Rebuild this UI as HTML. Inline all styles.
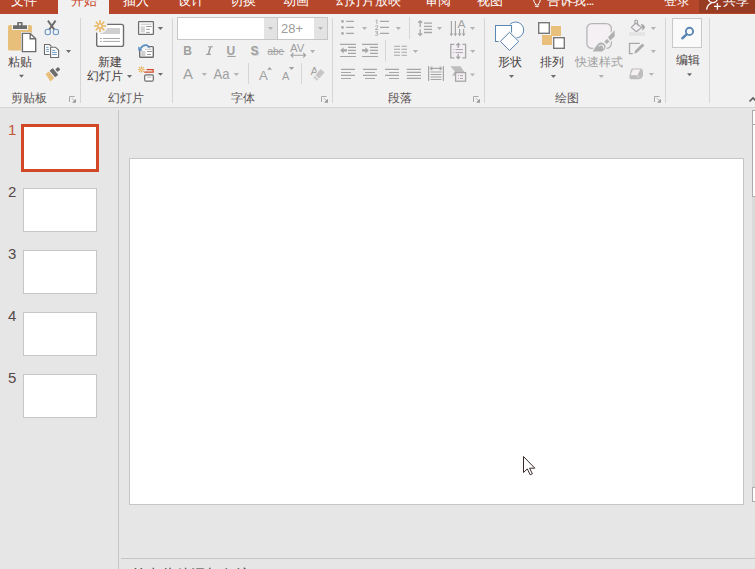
<!DOCTYPE html>
<html><head><meta charset="utf-8">
<style>
*{margin:0;padding:0;box-sizing:border-box}
html,body{width:755px;height:569px;overflow:hidden;background:#e6e6e6;font-family:"Liberation Sans",sans-serif;position:relative}
.a{position:absolute}
#top{left:0;top:0;width:755px;height:14px;background:#b7472a;overflow:hidden}
.tab{position:absolute;top:-6px;font-size:13px;line-height:14px;color:#fff;white-space:nowrap}
#rib{left:0;top:14px;width:755px;height:93px;background:#f1f1f1}
#ribb{left:0;top:107px;width:755px;height:1px;background:#d4d4d4}
.sep{position:absolute;width:1px;background:#d6d6d6}
.lbl{position:absolute;font-size:12px;line-height:14px;color:#5e5656;white-space:nowrap;margin-top:1px}
.big{position:absolute;font-size:12px;line-height:14px;color:#4a4242;white-space:nowrap;margin-top:1px}
.arr{position:absolute;width:0;height:0;border-left:2.5px solid transparent;border-right:2.5px solid transparent;border-top:3px solid #6d6d6d}
.arrg{border-top-color:#b0b0b0}
.launch{position:absolute;width:7px;height:7px}
.thumb{position:absolute;left:23px;width:74px;height:44px;background:#fff;border:1px solid #c6c6c6}
.num{position:absolute;left:8px;font-size:15px;line-height:16px;color:#564a48}
</style></head><body>
<div id="top" class="a">
  <div class="a" style="left:58px;top:0;width:51px;height:14px;background:#f1f1f1"></div>
  <div class="a" style="left:699px;top:0;width:56px;height:13px;background:#973b22"></div>
  <div class="tab" style="left:11px">文件</div>
  <div class="tab" style="left:71px;color:#c8431f">开始</div>
  <div class="tab" style="left:123px">插入</div>
  <div class="tab" style="left:178px">设计</div>
  <div class="tab" style="left:230px">切换</div>
  <div class="tab" style="left:283px">动画</div>
  <div class="tab" style="left:336px">幻灯片放映</div>
  <div class="tab" style="left:425px">审阅</div>
  <div class="tab" style="left:477px">视图</div>
  <div class="tab" style="left:547px">告诉我<span style="letter-spacing:-1.2px">...</span></div>
  <div class="tab" style="left:664px">登录</div>
  <div class="tab" style="left:723px">共享</div>
  <svg class="a" style="left:0;top:0" width="755" height="14" viewBox="0 0 755 14">
   <path d="M533.6 -1Q533.6 2.2 535.4 3.8V5H538.6V3.8Q540.4 2.2 540.4 -1" fill="none" stroke="#fff" stroke-width="1"/>
   <path d="M535.3 6.6H538.7" stroke="#fff" stroke-width="1"/>
   <circle cx="712.8" cy="-2" r="4.6" fill="none" stroke="#fff" stroke-width="1.3"/>
   <path d="M706.6 9.6Q707.4 4.6 711.5 3.2" fill="none" stroke="#fff" stroke-width="1.3"/>
   <path d="M717.4 3V9.8M714 6.4H720.8" stroke="#fff" stroke-width="1.3"/>
  </svg>
</div>
<div id="rib" class="a"></div>
<div id="ribb" class="a"></div>


<!-- RIBBON CONTENT -->
<div class="sep" style="left:80px;top:18px;height:85px"></div>
<div class="sep" style="left:172px;top:18px;height:85px"></div>
<div class="sep" style="left:332px;top:18px;height:85px"></div>
<div class="sep" style="left:484px;top:18px;height:85px"></div>
<div class="sep" style="left:665px;top:18px;height:85px"></div>
<div class="sep" style="left:709px;top:18px;height:85px"></div>

<div class="lbl" style="left:11px;top:90px">剪贴板</div>
<div class="lbl" style="left:108px;top:90px">幻灯片</div>
<div class="lbl" style="left:231px;top:90px">字体</div>
<div class="lbl" style="left:388px;top:90px">段落</div>
<div class="lbl" style="left:555px;top:90px">绘图</div>

<div class="big" style="left:8px;top:54px">粘贴</div>
<div class="big" style="left:98px;top:54px">新建</div>
<div class="big" style="left:87px;top:68px">幻灯片</div>

<svg class="a" style="left:0;top:0" width="755" height="107" viewBox="0 0 755 107">
 <g id="launchers"><path d="M69.5 102V96.5H74.5" fill="none" stroke="#a8a8a8" stroke-width="1"/><path d="M72 98.3L75.2 101.5" stroke="#a8a8a8" stroke-width="0.9"/><path d="M76 98.8V102.8H72Z" fill="#9a9a9a"/><path d="M321.5 102V96.5H326.5" fill="none" stroke="#a8a8a8" stroke-width="1"/><path d="M324 98.3L327.2 101.5" stroke="#a8a8a8" stroke-width="0.9"/><path d="M328 98.8V102.8H324Z" fill="#9a9a9a"/><path d="M473.5 102V96.5H478.5" fill="none" stroke="#a8a8a8" stroke-width="1"/><path d="M476 98.3L479.2 101.5" stroke="#a8a8a8" stroke-width="0.9"/><path d="M480 98.8V102.8H476Z" fill="#9a9a9a"/><path d="M654.5 102V96.5H659.5" fill="none" stroke="#a8a8a8" stroke-width="1"/><path d="M657 98.3L660.2 101.5" stroke="#a8a8a8" stroke-width="0.9"/><path d="M661 98.8V102.8H657Z" fill="#9a9a9a"/></g>
 <!-- paste -->
 <rect x="8" y="25" width="24" height="25.5" rx="1.5" fill="#e8bf7a"/>
 <rect x="12" y="24.5" width="16" height="5.5" fill="#f1f1f1"/>
 <path d="M13 25.3H17.2V22.3Q17.2 22 17.6 22H22.2Q22.6 22 22.6 22.3V25.3H27V29H13Z" fill="#6d6d6d"/>
 <circle cx="19.9" cy="24.3" r="1.1" fill="#f1f1f1"/>
 <path d="M21 32H30.6L37 38.3V53H21Z" fill="#f1f1f1"/>
 <path d="M22.4 33.4H30.2L35.7 38.8V51.6H22.4Z" fill="#fff" stroke="#6d6d6d" stroke-width="1.4"/>
 <path d="M30.2 33.4V38.8H35.7" fill="none" stroke="#6d6d6d" stroke-width="1.4"/>
 <path d="M19 74.8H24L21.5 77.8Z" fill="#6d6d6d"/>
 <!-- scissors -->
 <path d="M47.9 20.6L54.3 29.6M55.6 20.6L49.2 29.6" stroke="#6d6d6d" stroke-width="1.9" fill="none"/>
 <circle cx="47.8" cy="32" r="2.7" fill="none" stroke="#6a97c4" stroke-width="1.05"/>
 <circle cx="55.9" cy="32" r="2.7" fill="none" stroke="#6a97c4" stroke-width="1.05"/>
 <!-- copy -->
 <path d="M44.5 44.5H49.5L51.8 46.8V54.5H44.5Z" fill="#fff" stroke="#6d6d6d" stroke-width="1.1"/>
 <path d="M46.2 47.3H48.6M46.2 49.4H49M46.2 51.4H49" stroke="#5b8dc0" stroke-width="0.9"/>
 <path d="M49.7 46.4H55.8L59.4 50V58.2H49.7Z" fill="#f1f1f1"/>
 <path d="M50.6 47.2H55.5L58.6 50.3V57.5H50.6Z" fill="#fff" stroke="#6d6d6d" stroke-width="1.1"/>
 <path d="M52.2 50.4H55.2M52.2 52.4H56.8M52.2 54.4H56.8" stroke="#5b8dc0" stroke-width="0.9"/>
 <path d="M66 50H71L68.5 53Z" fill="#6d6d6d"/>
 <!-- format painter -->
 <g transform="translate(53.6 73) rotate(-40)">
  <rect x="3.6" y="-1.7" width="3.8" height="3.4" rx="0.6" fill="#6d6d6d"/>
  <rect x="-1.6" y="-4.3" width="4" height="8.6" rx="0.6" fill="#6d6d6d"/>
  <path d="M-2.6 -4.2V4.2L-7.8 4.4L-6.8 -4.4Z" fill="#e8bf7a"/>
 </g>
 <!-- new slide -->
 <rect x="96.7" y="24.4" width="26.8" height="22" rx="2" fill="#fff" stroke="#6d6d6d" stroke-width="1.4"/>
 <rect x="100" y="28" width="20" height="6" fill="#d0d0d0"/>
 <path d="M100 38.5H102M103 38.5H120M100 41.4H102M103 41.4H120" stroke="#a8a8a8" stroke-width="1"/>
 <circle cx="100" cy="26" r="7.5" fill="#f1f1f1"/>
 <g stroke="#e9b865" stroke-width="1.6">
  <path d="M100 20V24M100 28V32M94 26H98M102 26H106M95.8 21.8L98.6 24.6M101.4 27.4L104.2 30.2M104.2 21.8L101.4 24.6M98.6 27.4L95.8 30.2"/>
 </g>
 <circle cx="100" cy="26" r="2" fill="none" stroke="#e9b865" stroke-width="1.2"/>
 <path d="M127 75H132L129.5 78Z" fill="#6d6d6d"/>
 <!-- layout -->
 <rect x="138.6" y="21.6" width="14.8" height="12.8" rx="0.6" fill="#fff" stroke="#6d6d6d" stroke-width="1.25"/>
 <rect x="140.8" y="23.6" width="10.6" height="1.5" fill="#d4d4d4"/>
 <rect x="140.6" y="26.3" width="4.3" height="6.2" fill="#d4d4d4"/>
 <path d="M146.2 26.5H151.8M146.2 29.4H149.8M146.2 32.4H149.8" stroke="#8f8f8f" stroke-width="0.9"/>
 <path d="M157.7 27H163.1L160.4 30Z" fill="#6d6d6d"/>
 <!-- reset -->
 <rect x="139.7" y="46.6" width="13.6" height="10.6" rx="0.8" fill="#fff" stroke="#6d6d6d" stroke-width="1.4"/>
 <rect x="145" y="48.4" width="6.5" height="1.6" fill="#d0d0d0"/>
 <rect x="141.2" y="51" width="4.3" height="5" fill="#d0d0d0"/>
 <path d="M147 51.5H152M147 54.5H151" stroke="#8f8f8f" stroke-width="0.9"/>
 <path d="M138 44H149V49H138Z" fill="#f1f1f1"/>
 <path d="M140.5 48.5Q143 44.5 146.5 45.2Q148.5 45.8 149 47.8" fill="none" stroke="#5b8dc0" stroke-width="1.8"/>
 <path d="M138.2 46.2L138.4 50.8L142.8 50.4Z" fill="#5b8dc0"/>
 <!-- section -->
 <g stroke="#e9b865" stroke-width="1.1">
  <path d="M141.4 66.2V68.4M141.4 70.6V72.8M138 69.5H140.2M142.6 69.5H144.8M139 67.1L140.4 68.5M142.4 70.5L143.8 71.9M143.8 67.1L142.4 68.5M140.4 70.5L139 71.9"/>
 </g>
 <circle cx="141.4" cy="69.5" r="1" fill="none" stroke="#e9b865" stroke-width="0.9"/>
 <path d="M146.6 69.55H153.2V72.15H144.2" fill="none" stroke="#d24726" stroke-width="1.15"/>
 <rect x="144.7" y="74.8" width="8.6" height="6.4" rx="1.2" fill="#fff" stroke="#6d6d6d" stroke-width="1.2"/>
 <rect x="146.6" y="76.5" width="4.8" height="1.3" fill="#c8c8c8"/>
 <path d="M157.9 73H163L160.45 75.8Z" fill="#6d6d6d"/>
</svg>


<!-- FONT GROUP -->
<div class="a" style="left:177px;top:17px;width:101px;height:23px;border:1px solid #c6c6c6;background:#fff"></div>
<div class="a" style="left:264px;top:18px;width:13px;height:21px;background:#e3e3e3"></div>
<div class="a" style="left:277px;top:17px;width:51px;height:23px;border:1px solid #c6c6c6;background:#fff"></div>
<div class="a" style="left:314px;top:18px;width:13px;height:21px;background:#e3e3e3"></div>
<svg class="a" style="left:0;top:0" width="755" height="107" viewBox="0 0 755 107" font-family="Liberation Sans, sans-serif">
 <g fill="#b3b3b3">
  <path d="M268 27H273L270.5 30Z"/><path d="M318 27H323L320.5 30Z"/>
  <path d="M310 50H315.2L312.6 53.2Z"/>
  <path d="M201.8 73H207L204.4 76Z"/><path d="M233.6 73H239L236.3 76Z"/>
 </g>
 <text x="281" y="33" font-size="12.6" fill="#9c9c9c" textLength="22" lengthAdjust="spacingAndGlyphs">28+</text>
 <g fill="#a0a0a0">
  <text x="183.2" y="54.8" font-size="12" font-weight="bold">B</text>
  <path d="M208.2 46.2H213V47.3H211.2L209.4 53.8H211V54.9H206V53.8H207.7L209.5 47.3H208Z"/>
  <text x="226.4" y="54.8" font-size="12" font-weight="bold">U</text>
  <rect x="227.3" y="55.9" width="8.4" height="1.1"/>
  <text x="251.6" y="56.4" font-size="12" font-weight="bold" fill="#d2d2d2">S</text>
  <text x="250.4" y="55.4" font-size="12" font-weight="bold">S</text>
  <text x="267.6" y="54.8" font-size="11" textLength="16" lengthAdjust="spacingAndGlyphs">abc</text>
  <rect x="267.5" y="51" width="17" height="1"/>
  <text x="290" y="51.6" font-size="10" textLength="14.3" lengthAdjust="spacingAndGlyphs">AV</text>
  <text x="183" y="78.7" font-size="15">A</text>
  <text x="213.6" y="78.7" font-size="15" textLength="16" lengthAdjust="spacingAndGlyphs">Aa</text>
  <text x="259" y="79.7" font-size="13.2">A</text>
  <path d="M267.2 69.7L269.6 67L272 69.7Z"/>
  <text x="282" y="79.7" font-size="11">A</text>
  <path d="M288.9 67H294.2L291.55 69.9Z"/>
 </g>
 <path d="M291 55.3H305.5M293.3 53L291 55.3L293.3 57.6M303.2 53L305.5 55.3L303.2 57.6" fill="none" stroke="#a0a0a0" stroke-width="1.1"/>
 <rect x="248" y="63" width="1" height="21" fill="#d6d6d6"/>
 <rect x="301" y="63" width="1" height="21" fill="#d6d6d6"/>
 <!-- clear formatting -->
 <text x="310.5" y="75.2" font-size="11.5" fill="#a3a3a3">A</text>
 <g transform="translate(319.9 73.8) rotate(-48)">
  <rect x="-5" y="-3.6" width="10" height="7.2" fill="#f1f1f1"/>
  <rect x="-4" y="-2.6" width="8.2" height="5.2" rx="0.8" fill="#c6c6c6"/>
  <rect x="-7.2" y="-2.6" width="2.2" height="5.2" rx="0.5" fill="#cfcfcf"/>
 </g>
</svg>


<!-- PARAGRAPH GROUP -->
<svg class="a" style="left:0;top:0" width="755" height="107" viewBox="0 0 755 107" font-family="Liberation Sans, sans-serif">
 <g fill="#b3b3b3">
  <path d="M362 27H367L364.5 30Z"/><path d="M395.8 27H400.9L398.35 30Z"/>
  <path d="M437 27.1H442L439.5 30Z"/><path d="M470 27.1H475L472.5 30Z"/>
  <path d="M412.8 49.9H418.1L415.45 53Z"/><path d="M470.2 49.9H475.3L472.75 53Z"/>
  <path d="M469.8 73.4H475.1L472.45 76.3Z"/>
 </g>
 <g fill="#a6a6a6">
  <circle cx="342.5" cy="21.4" r="1.3"/><circle cx="342.5" cy="27.4" r="1.3"/><circle cx="342.5" cy="33.4" r="1.3"/>
 </g>
 <g stroke="#a6a6a6" stroke-width="1.2" fill="none">
  <path d="M346.2 21.4H354M346.2 27.4H354M346.2 33.4H354"/>
  <path d="M380 21.4H389M380 27.4H389M380 33.4H389"/>
 </g>
 <g fill="none" stroke="#a6a6a6" stroke-width="0.9">
  <path d="M375.6 20.6L376.9 19.9V23.9"/>
  <path d="M375.2 26.2Q376.7 25 378 26Q378.4 27 375.2 29.5H378.3"/>
  <path d="M375.2 31.8H378L376.4 33.2Q378.4 33.4 378.1 34.6Q377 36 375.2 35.2"/>
 </g>
 <rect x="409" y="17" width="1" height="22" fill="#d6d6d6"/>
 <rect x="385" y="40" width="1" height="21.5" fill="#d6d6d6"/>
 <!-- line spacing -->
 <g stroke="#a6a6a6" stroke-width="1.3" fill="none">
  <path d="M420.2 21V27.2M420.2 29.3V35.2M418.2 22.8L420.2 20.8L422.2 22.8M418.2 33.4L420.2 35.4L422.2 33.4"/>
  <path d="M424 23.2H432M424 26.4H432M424 29.4H432M424 32.5H432"/>
 </g>
 <!-- text direction -->
 <g stroke="#a6a6a6" stroke-width="1.2" fill="none">
  <path d="M451.4 21V35.5M455.4 21V35.5M459.6 29V35.5M463.6 29V35.5"/>
 </g>
 <g fill="#a6a6a6">
  <path d="M449.6 33.4H453.2L451.4 36.2Z"/><path d="M453.6 33.4H457.2L455.4 36.2Z"/>
  <path d="M457.8 33.4H461.4L459.6 36.2Z"/><path d="M461.8 33.4H465.4L463.6 36.2Z"/>
  <text x="457.5" y="28" font-size="10.5" textLength="8" lengthAdjust="spacingAndGlyphs">A</text>
 </g>
 <!-- indent -->
 <g stroke="#a6a6a6" stroke-width="1.2" fill="none">
  <path d="M340 44.4H356M348 47.4H356M348 50.4H356M348 53.4H356M340 56.5H356"/>
  <path d="M362 44.4H378M370 47.4H378M370 50.4H378M370 53.4H378M362 56.5H378"/>
 </g>
 <g fill="#a6a6a6">
  <path d="M340.2 50.4L343.6 47.2V49.3H347V51.5H343.6V53.6Z"/>
  <path d="M368.8 50.4L365.4 47.2V49.3H362V51.5H365.4V53.6Z"/>
 </g>
 <!-- columns -->
 <g stroke="#a6a6a6" stroke-width="1.1" fill="none">
  <path d="M394 46.3H400M394 49.3H400M394 52.3H400M394 55.3H400M401.5 46.3H407M401.5 49.3H407M401.5 52.3H407M401.5 55.3H407"/>
 </g>
 <!-- align text -->
 <rect x="451" y="44.5" width="14.5" height="13" fill="#f4eff4"/>
 <g stroke="#a6a6a6" stroke-width="1.3" fill="none">
  <path d="M454.3 44.3H450.8V57.8H454.3M462.4 44.3H465.6V57.8H462.4"/>
  <path d="M458.2 43.5V48M456.3 45.4L458.2 43.5L460.1 45.4M458.2 54V58.5M456.3 56.6L458.2 58.5L460.1 56.6"/>
 </g>
 <g stroke="#a6a6a6" stroke-width="1" fill="none">
  <path d="M453.3 49.6H454.3M455.5 49.6H463M453.3 52.6H454.3M455.5 52.6H463"/>
 </g>
 <!-- align row -->
 <g stroke="#a6a6a6" stroke-width="1.1" fill="none">
  <path d="M341 69.4H355M341 72.5H351M341 75.4H355M341 78.5H351"/>
  <path d="M363 69.4H377M365 72.5H375M363 75.4H377M365 78.5H375"/>
  <path d="M385 69.4H399M389 72.5H399M385 75.4H399M389 78.5H399"/>
  <path d="M406.8 69.4H421M406.8 72.4H421M406.8 75.5H421M406.8 78.4H421"/>
 </g>
 <!-- distributed -->
 <g stroke="#a6a6a6" stroke-width="1.2" fill="none">
  <path d="M428.6 66V81M443.4 66V81"/>
  <path d="M430.5 68.4H441.5M432.3 66.6L430.5 68.4L432.3 70.2M439.7 66.6L441.5 68.4L439.7 70.2"/>
  <path d="M430.5 72H441.5M430.5 74.5H441.5M430.5 77H441.5M430.5 79.5H441.5"/>
 </g>
 <!-- smartart -->
 <path d="M450.2 66.2H460.5L464.7 72.5H455.2V75.8H452.2L454.8 71Z" fill="#bdbdbd"/>
 <rect x="455.6" y="72.6" width="10" height="8.6" fill="#f4eff4" stroke="#a6a6a6" stroke-width="1.3"/>
 <path d="M458 75.6H458.9M460 75.6H463M458 78.4H458.9M460 78.4H463" stroke="#a6a6a6" stroke-width="1"/>
</svg>


<!-- DRAWING GROUP -->
<div class="big" style="left:498px;top:54px">形状</div>
<div class="big" style="left:540px;top:54px">排列</div>
<div class="big" style="left:575px;top:54px;color:#a0a0a0">快速样式</div>
<div class="big" style="left:676px;top:52px">编辑</div>
<div class="a" style="left:672px;top:18px;width:30px;height:30px;border:1px solid #c8c8c8;background:#fafafa"></div>
<svg class="a" style="left:0;top:0" width="755" height="107" viewBox="0 0 755 107">
 <g fill="#6d6d6d">
  <path d="M509 75H514L511.5 78Z"/><path d="M550.8 75H556L553.4 78Z"/>
  <path d="M687 73.2H692L689.5 76.2Z"/>
 </g>
 <g fill="#b3b3b3">
  <path d="M598.7 75H604L601.35 78Z"/>
  <path d="M650.8 27.1H656L653.4 30Z"/><path d="M650.8 50H656L653.4 53Z"/><path d="M648.9 73H654L651.45 75.8Z"/>
 </g>
 <!-- shapes -->
 <circle cx="515.7" cy="30" r="8" fill="#fff" stroke="#5b87b5" stroke-width="1"/>
 <rect x="494.5" y="24.5" width="18" height="18" fill="#f1f1f1"/>
 <rect x="495.5" y="25.5" width="16" height="16" fill="#fff" stroke="#5b87b5" stroke-width="1"/>
 <path d="M509.5 30.4L520.7 41.4L509.5 52.5L498.4 41.4Z" fill="#f1f1f1"/>
 <path d="M509.5 32.4L518.7 41.4L509.5 50.5L500.4 41.4Z" fill="#fff" stroke="#5b87b5" stroke-width="1"/>
 <!-- arrange -->
 <rect x="542" y="26" width="19" height="19" fill="#e8c07c"/>
 <rect x="537" y="21" width="14" height="14" fill="#f1f1f1"/>
 <rect x="538.7" y="22.7" width="10.6" height="10.6" fill="#fff" stroke="#787878" stroke-width="1.4"/>
 <rect x="552" y="36" width="14" height="14" fill="#f1f1f1"/>
 <rect x="553.7" y="37.7" width="10.6" height="10.6" fill="#fff" stroke="#787878" stroke-width="1.4"/>
 <!-- quick styles -->
 <rect x="586.9" y="23.6" width="24.4" height="24.8" rx="5" fill="#f4f0f4" stroke="#b5b5b5" stroke-width="1.3"/>
 <g stroke="#f1f1f1" stroke-width="2.6" stroke-linejoin="round" fill="#f1f1f1">
  <path d="M608 37.3L614.6 30.2V36.6L610.2 40.5Z"/>
  <path d="M604.3 41.5L607.2 38.9L609.6 41.4L606.6 43.9Z"/>
  <path d="M592.7 51.6L602 51.6Q606 49.5 605.5 45.6Q604 42.2 600.2 42.6Q597 44 592.7 51.6Z"/>
 </g>
 <g fill="#b0b0b0">
  <path d="M608 37.3L614.6 30.2V36.6L610.2 40.5Z"/>
  <path d="M604.3 41.5L607.2 38.9L609.6 41.4L606.6 43.9Z"/>
  <path d="M592.7 51.6L602 51.6Q606 49.5 605.5 45.6Q604 42.2 600.2 42.6Q597 44 592.7 51.6Z"/>
 </g>
 <path d="M598.6 46.4Q600.6 44.2 603.2 45.6Q604.2 47 603 48.6" fill="none" stroke="#f4f0f4" stroke-width="1.1"/>
 <!-- fill -->
 <path d="M631.3 27.4L636 23L641.6 27.6L636.4 31.7Z" fill="#f4f0f4" stroke="#a6a6a6" stroke-width="1.2" stroke-linejoin="round"/>
 <path d="M634.8 24.5V21.2Q634.8 20.4 635.8 20.4H636.6Q637.6 20.4 637.6 21.2V25.4" fill="none" stroke="#a6a6a6" stroke-width="1.1"/>
 <path d="M640.9 24.1Q644.6 24.2 645 27.4L642.4 31.1L642.3 27.8Z" fill="#a6a6a6"/>
 <rect x="629" y="32.2" width="16" height="3.6" fill="#e3e3e3"/>
 <!-- outline -->
 <path d="M639.8 43.3H629.5V53.6H632.8" fill="none" stroke="#a8a8a8" stroke-width="1.3"/>
 <path d="M634.2 53.8L635.2 50.6L641.6 44.2Q642.6 43.4 643.5 44.3Q644.3 45.2 643.6 46.2L637.2 52.6Z" fill="#ababab"/>
 <!-- effects -->
 <path d="M632.5 68.6H640.8Q642.9 68.7 643 71.5V75.2Q642.5 78.8 639 79.2H631Q629 79 629.3 76.5L631 70Q631.4 68.7 632.5 68.6Z" fill="#bdbdbd"/>
 <path d="M632.8 69.4H640.4L637.3 75.2H630.6Z" fill="#f4f0f4"/>
 <path d="M637.3 75.2L638.8 77.6" stroke="#f4f0f4" stroke-width="0.8"/>
 <!-- edit magnifier -->
 <circle cx="689.5" cy="31.4" r="3.6" fill="none" stroke="#5b87b5" stroke-width="1.9"/>
 <path d="M686.6 34.4L682.4 38.2" stroke="#5b87b5" stroke-width="2.6" stroke-linecap="round"/>
 <!-- collapse caret -->
 <path d="M749.5 101.5L753 98L756.5 101.5" fill="none" stroke="#5f5f5f" stroke-width="1.6"/>
</svg>

<!-- workspace -->
<div class="a" style="left:118px;top:110px;width:1px;height:459px;background:#c6c6c6"></div>
<div class="a" style="left:129px;top:158px;width:615px;height:347px;background:#fff;border:1px solid #c6c6c6"></div>
<div class="a" style="left:121px;top:558px;width:634px;height:1px;background:#c6c6c6"></div>

<!-- thumbs -->
<div class="num" style="top:122px;color:#c0553a">1</div>
<div class="a" style="left:21px;top:124px;width:78px;height:48px;border:3px solid #d24726;background:#fff"></div>
<div class="num" style="top:184px">2</div>
<div class="thumb" style="top:188px"></div>
<div class="num" style="top:246px">3</div>
<div class="thumb" style="top:250px"></div>
<div class="num" style="top:308px">4</div>
<div class="thumb" style="top:312px"></div>
<div class="num" style="top:370px">5</div>
<div class="thumb" style="top:374px"></div>


<!-- scrollbar -->
<div class="a" style="left:752px;top:110px;width:3px;height:15px;border:1px solid #ababab;border-right:none;background:#fff"></div>
<div class="a" style="left:752px;top:124px;width:3px;height:73px;border:1px solid #ababab;border-right:none;background:#fff"></div>
<div class="a" style="left:752px;top:197px;width:3px;height:290px;background:#dadada"></div>
<div class="a" style="left:752px;top:487px;width:3px;height:15px;border:1px solid #ababab;border-right:none;background:#fff"></div>
<!-- notes -->
<div class="a" style="left:131px;top:567px;font-size:14.6px;line-height:16px;color:#444;white-space:nowrap">单击此处添加备注</div>
<!-- cursor -->
<svg class="a" style="left:520px;top:453px" width="20" height="25" viewBox="0 0 20 25">
 <path d="M3.5 3.5V19.5L7.3 15.9L10.2 21.8L12.4 20.8L9.6 15.2H14.8Z" fill="#fff" stroke="#3a2a2a" stroke-width="1" stroke-linejoin="miter"/>
</svg>
</body></html>
